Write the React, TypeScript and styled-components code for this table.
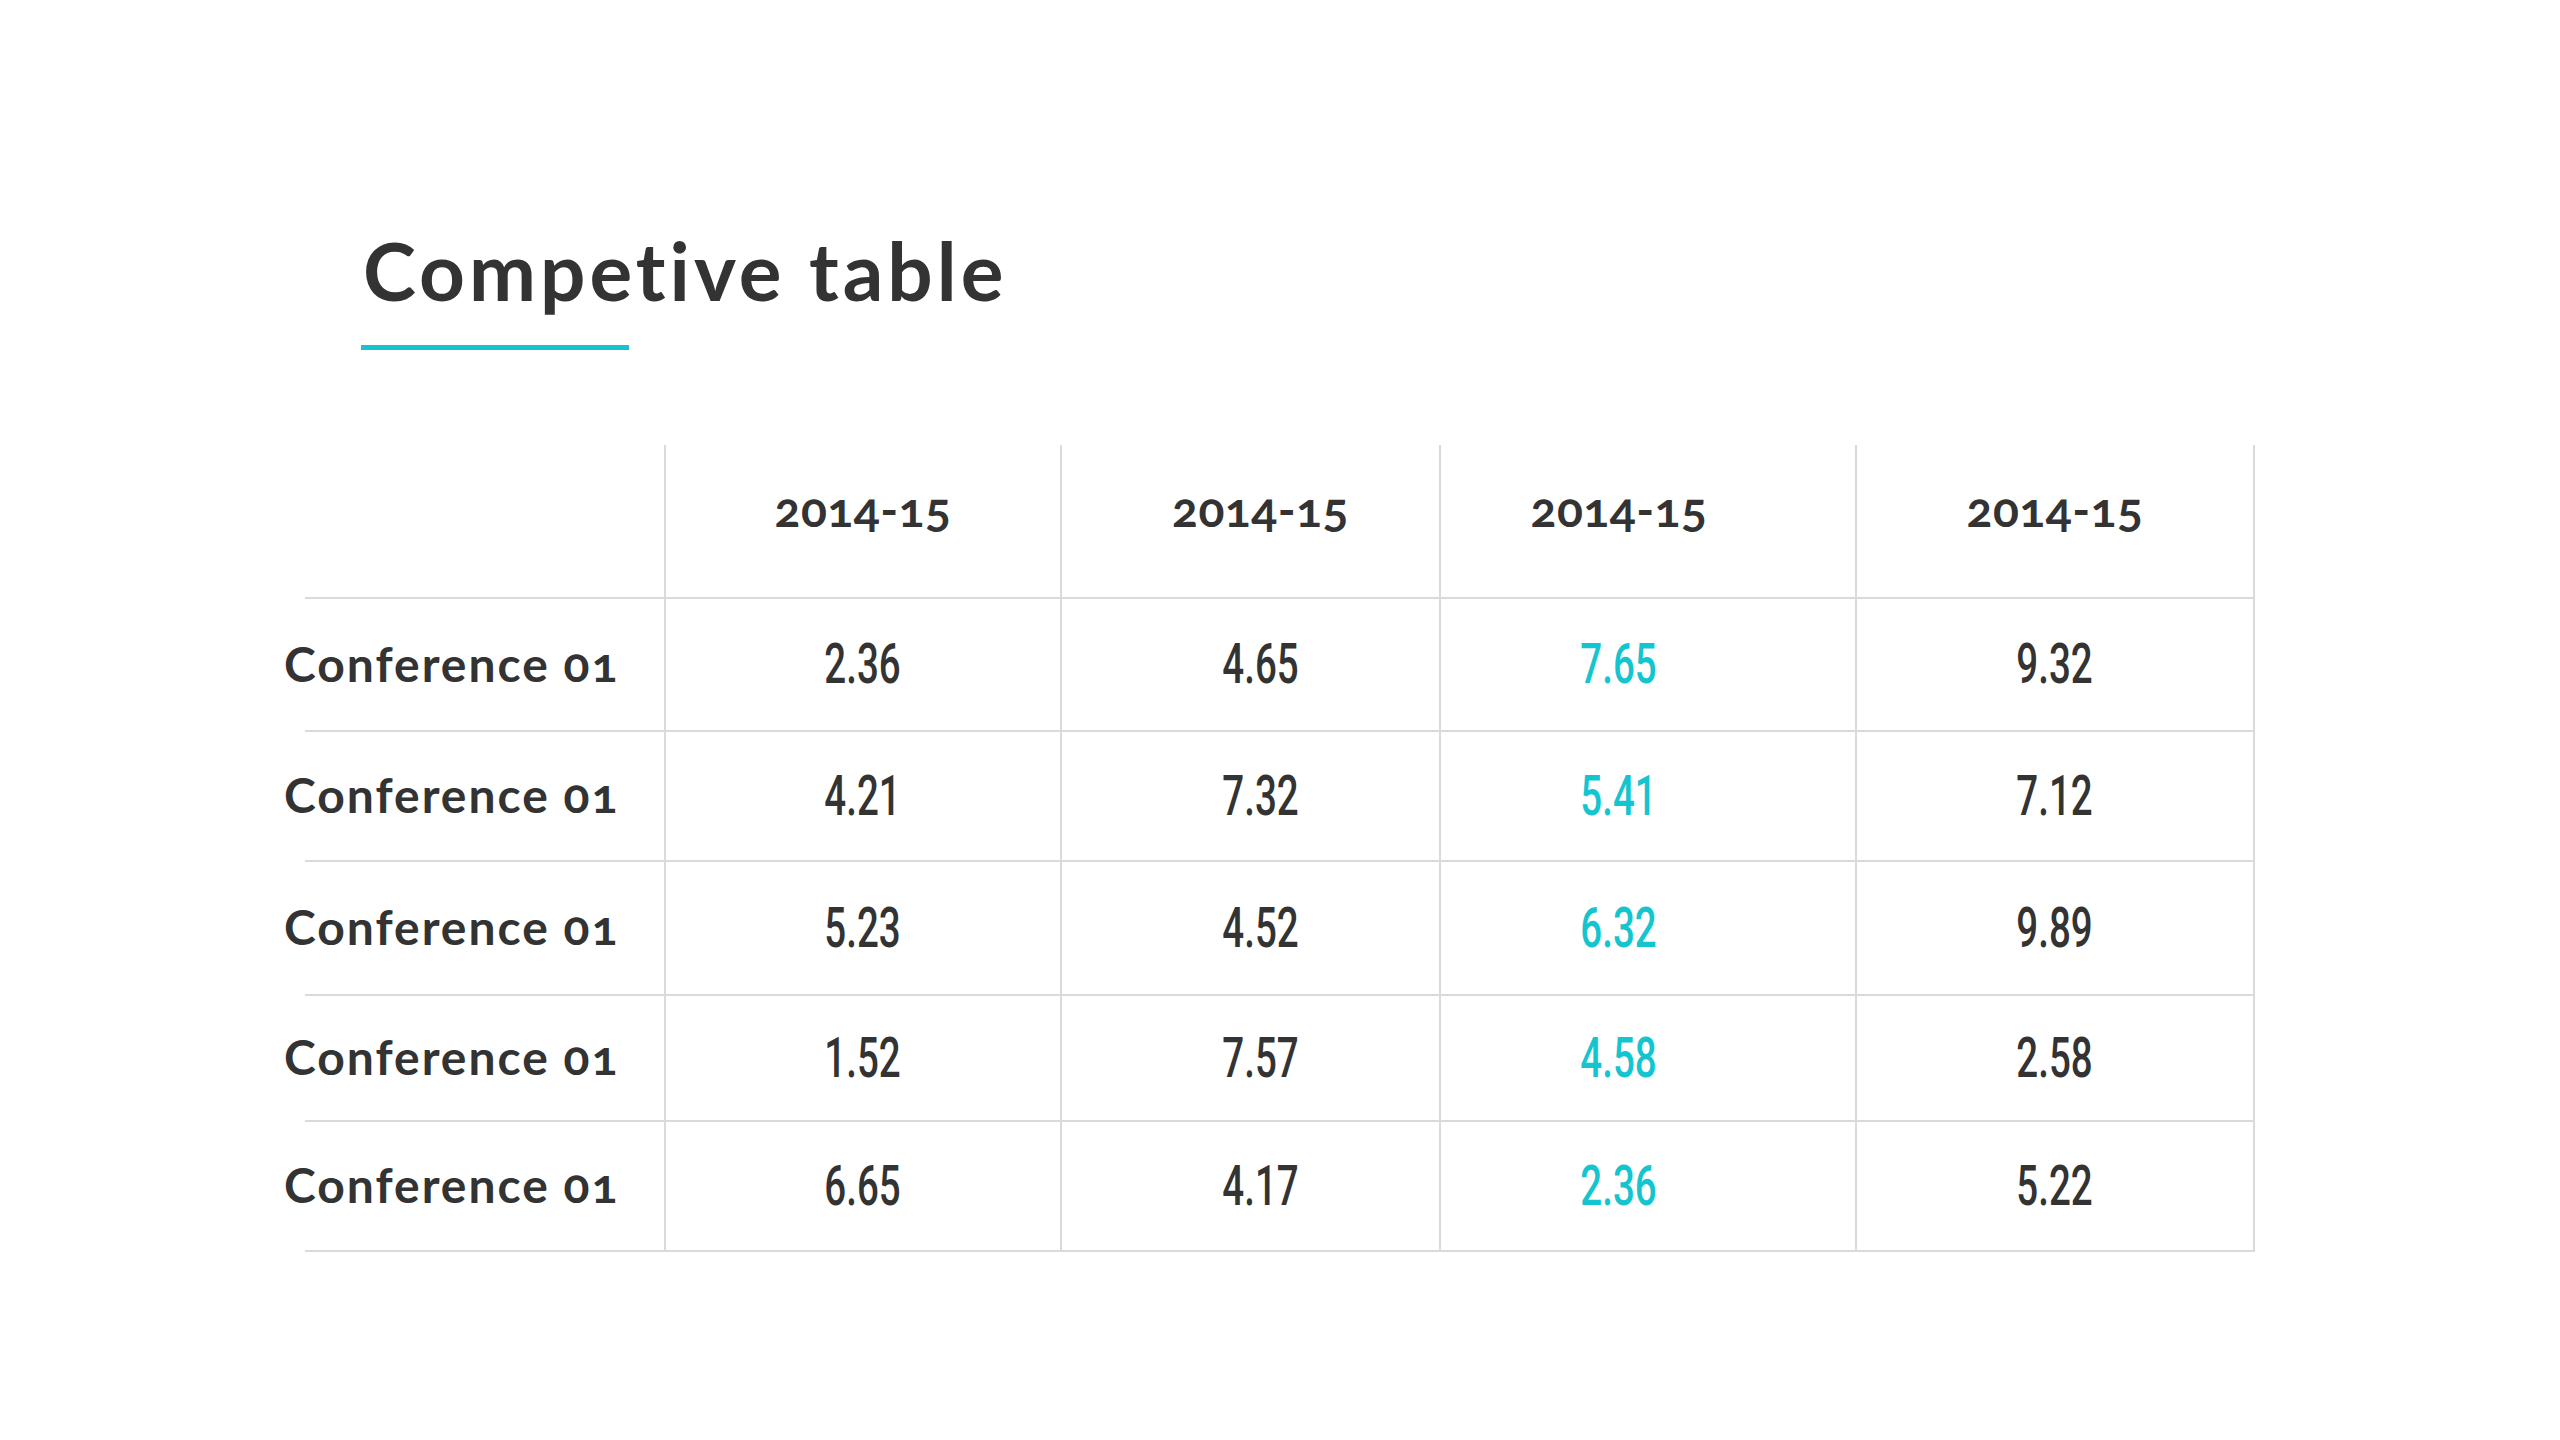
import React from "react";
import styled, { createGlobalStyle } from "styled-components";

const GlobalStyle = createGlobalStyle`
  html, body {
    margin: 0;
    padding: 0;
    background: #ffffff;
  }
  * { box-sizing: border-box; }
`;

const DARK = "#333333";
const CYAN = "#14c5d0";
const LINE = "#dadada";

const Slide = styled.div`
  width: 2560px;
  height: 1440px;
  background: #ffffff;
  display: flex;
  flex-direction: column;
  padding-top: 230px;
  font-family: Lato, "Open Sans", sans-serif;
  color: ${DARK};
`;

const TitleBlock = styled.div`
  display: flex;
  flex-direction: column;
  align-items: flex-start;
  padding-left: 361px;
`;

const Title = styled.h1`
  margin: 0 0 0 2px;
  font-family: Lato, "Open Sans", sans-serif;
  font-weight: 700;
  font-size: 80px;
  line-height: 1;
  letter-spacing: 4px;
  color: ${DARK};
`;

const Underline = styled.div`
  width: 268px;
  height: 5px;
  margin-top: 35px;
  background: ${CYAN};
`;

const Table = styled.div`
  margin: 95px 0 0 305px;
  width: 1950px;
  display: grid;
  grid-template-columns: 359px 396px 379px 416px 400px;
  grid-template-rows: 154px 133px 130px 134px 126px 130px;
`;

const Cell = styled.div<{ $offset?: number; $first?: boolean; $last?: boolean }>`
  display: flex;
  align-items: center;
  justify-content: ${(p) => (p.$first ? "flex-start" : "center")};
  border-bottom: 2px solid ${LINE};
  border-left: ${(p) => (p.$first ? "none" : `2px solid ${LINE}`)};
  border-right: ${(p) => (p.$last ? `2px solid ${LINE}` : "none")};
  padding-left: ${(p) => ((p.$offset ?? 0) > 0 ? 2 * (p.$offset ?? 0) : 0)}px;
  padding-right: ${(p) => ((p.$offset ?? 0) < 0 ? -2 * (p.$offset ?? 0) : 0)}px;
`;

const HeadText = styled.span`
  font-family: Lato, "Open Sans", sans-serif;
  font-weight: 700;
  font-size: 48px;
  font-variant-numeric: oldstyle-nums;
  letter-spacing: 0.5px;
  color: ${DARK};
  margin-top: -26px;
`;

const RowLabel = styled.span`
  margin-left: -21px;
  margin-top: -3px;
  font-family: Lato, "Open Sans", sans-serif;
  font-weight: 700;
  font-size: 48px;
  font-variant-numeric: oldstyle-nums;
  letter-spacing: 2px;
  color: ${DARK};
  white-space: nowrap;
`;

const Value = styled.span<{ $accent?: boolean }>`
  display: inline-block;
  font-family: Roboto, "DejaVu Sans", sans-serif;
  font-weight: 500;
  font-size: 55px;
  line-height: 1;
  transform: scaleX(0.7);
  color: ${(p) => (p.$accent ? CYAN : DARK)};
`;

const offsets = [0, 10, -29, 0];

const rows: string[][] = [
  ["2.36", "4.65", "7.65", "9.32"],
  ["4.21", "7.32", "5.41", "7.12"],
  ["5.23", "4.52", "6.32", "9.89"],
  ["1.52", "7.57", "4.58", "2.58"],
  ["6.65", "4.17", "2.36", "5.22"],
];

export default function App() {
  return (
    <>
      <GlobalStyle />
      <Slide>
        <TitleBlock>
          <Title>Competive table</Title>
          <Underline />
        </TitleBlock>
        <Table>
          <Cell $first />
          {offsets.map((o, i) => (
            <Cell key={`h${i}`} $offset={o} $last={i === 3}>
              <HeadText>2014-15</HeadText>
            </Cell>
          ))}
          {rows.map((r, ri) => (
            <React.Fragment key={ri}>
              <Cell $first>
                <RowLabel>Conference 01</RowLabel>
              </Cell>
              {r.map((v, ci) => (
                <Cell key={ci} $offset={offsets[ci]} $last={ci === 3}>
                  <Value $accent={ci === 2}>{v}</Value>
                </Cell>
              ))}
            </React.Fragment>
          ))}
        </Table>
      </Slide>
    </>
  );
}
